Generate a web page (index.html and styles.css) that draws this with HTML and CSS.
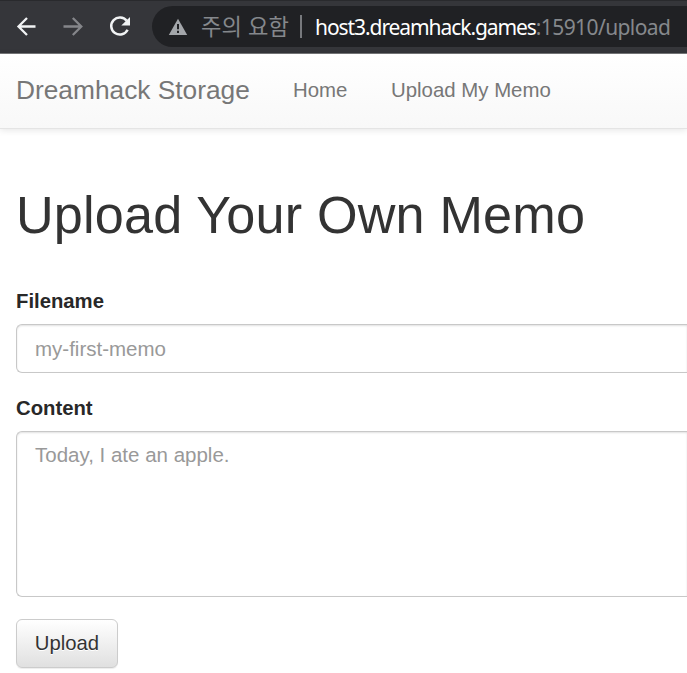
FILE: index.html
```html
<!DOCTYPE html>
<html lang="ko">
<head>
<meta charset="utf-8">
<title>Dreamhack Storage</title>
<link rel="stylesheet" href="styles.css">
</head>
<body>
<header class="toolbar">
  <svg class="nav-icons" width="152" height="53" viewBox="0 0 152 53" fill="none" stroke-width="2.3">
    <path d="M35.5 26.5H18.5M27 18L18.5 26.5L27 35" stroke="#f1f3f4"/>
    <path d="M63.5 26.5H81M72.8 18L81.3 26.5L72.8 35" stroke="#85868a"/>
    <path d="M126.7 20.8A8.6 8.6 0 1 0 127.6 29.7" stroke="#f1f3f4" stroke-width="2.5"/>
    <path d="M130 17V25.5H121.3Z" fill="#f1f3f4"/>
  </svg>
  <div class="address">
    <svg class="warning" width="20" height="18" viewBox="0 0 20 18">
      <path d="M10 0.8L19.2 17H0.8Z" fill="#a3a6aa"/>
      <path d="M10 6V11.2M10 12.7V15" stroke="#202124" stroke-width="2"/>
    </svg>
    <span class="security">주의 요함</span>
    <span class="divider"></span>
    <span class="url"><span class="host">host3.dreamhack.games</span><span class="path">:15910/upload</span></span>
  </div>
</header>
<nav class="navbar">
  <a class="brand">Dreamhack Storage</a>
  <a class="link home">Home</a>
  <a class="link memo">Upload My Memo</a>
</nav>
<main class="content">
  <h1>Upload Your Own Memo</h1>
  <form>
    <label for="filename">Filename</label>
    <input id="filename" type="text" placeholder="my-first-memo">
    <label for="memo">Content</label>
    <textarea id="memo" placeholder="Today, I ate an apple."></textarea>
    <button type="button">Upload</button>
  </form>
</main>
</body>
</html>
```
FILE: styles.css
```css
* { box-sizing: border-box; }
body {
  margin: 0;
  height: 673px;
  overflow: hidden;
  background: #fff;
  color: #333;
  font: 20.3px/29px "Liberation Sans", Arial, sans-serif;
}
.toolbar {
  display: flex;
  height: 54px;
  background: #35363a;
  border-top: 1px solid #292a2d;
  border-bottom: 1px solid #77787a;
}
.nav-icons { flex: none; margin-top: -1px; }
.address {
  display: flex;
  align-items: center;
  flex: 1;
  min-width: 0;
  height: 41px;
  margin-top: 5px;
  padding-left: 16px;
  border-radius: 21px 0 0 21px;
  background: #202124;
  white-space: nowrap;
}
.warning { flex: none; margin-top: 1px; }
.security {
  flex: none;
  width: 99px;
  margin: -4px 0 0 13px;
  color: #85888c;
  font: 400 22.2px/30px "Noto Sans CJK KR", sans-serif;
}
.divider { flex: none; width: 2px; height: 23px; background: #77797d; }
.url {
  margin-left: 13px;
  font: 21px/30px "Noto Sans", sans-serif;
}
.host { color: #fff; letter-spacing: -1.07px; }
.path { color: #85888c; letter-spacing: -0.6px; }
.navbar {
  display: flex;
  align-items: center;
  height: 75px;
  padding: 0 16px 1px;
  background: linear-gradient(#fff, #f8f8f8);
  border-bottom: 1px solid #e4e4e4;
  box-shadow: 0 1px 7px rgba(0, 0, 0, .11);
  color: #777;
  white-space: nowrap;
}
.brand { width: 277px; font-size: 26.3px; }
.link { font-size: 20.4px; }
.home { width: 98px; }
.content { padding: 58px 0 0 16px; }
h1 {
  margin: 0 0 43px;
  font-size: 52.2px;
  font-weight: 400;
  line-height: 57px;
  letter-spacing: .17px;
}
label {
  display: block;
  height: 37px;
  font-weight: 700;
  color: #282828;
}
input, textarea {
  display: block;
  width: 100%;
  margin: 0;
  padding: 8px 18px;
  border: 1px solid #c8c8c8;
  border-right: 0;
  border-radius: 6px 0 0 6px;
  background: #fff;
  box-shadow: inset 0 1px 2px rgba(0, 0, 0, .12);
  font: inherit;
  font-size: 20.5px;
  resize: none;
}
input { height: 49px; margin-bottom: 21px; }
textarea { height: 166px; margin-bottom: 22px; }
::placeholder { color: #999; opacity: 1; }
button {
  display: block;
  width: 102px;
  height: 49px;
  padding: 0;
  border: 1px solid #ccc;
  border-radius: 6px;
  background: linear-gradient(#fff, #e0e0e0);
  box-shadow: inset 0 1px 0 rgba(255, 255, 255, .15), 0 1px 1px rgba(0, 0, 0, .075);
  color: #333;
  font: inherit;
  text-shadow: 0 1px 0 #fff;
}
```
